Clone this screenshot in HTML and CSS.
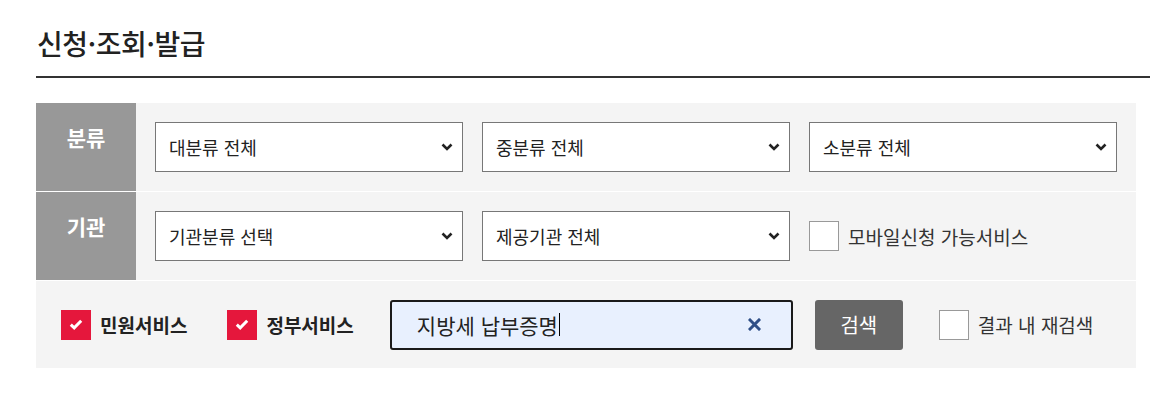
FILE: index.html
```html
<!DOCTYPE html>
<html lang="ko">
<head>
<meta charset="utf-8">
<link rel="stylesheet" href="styles.css">
</head>
<body>
<div class="page">
  <div class="head">
    <h1 class="title">신청·조회·발급</h1>
  </div>
  <div class="panel">
    <div class="row">
      <div class="label">분류</div>
      <div class="cells">
        <div class="select"><span>대분류 전체</span><svg class="chev" width="12" height="8" viewBox="0 0 12 8"><path d="M1.5 1.5 L6 6 L10.5 1.5" fill="none" stroke="#222" stroke-width="2.6"/></svg></div>
        <div class="select"><span>중분류 전체</span><svg class="chev" width="12" height="8" viewBox="0 0 12 8"><path d="M1.5 1.5 L6 6 L10.5 1.5" fill="none" stroke="#222" stroke-width="2.6"/></svg></div>
        <div class="select"><span>소분류 전체</span><svg class="chev" width="12" height="8" viewBox="0 0 12 8"><path d="M1.5 1.5 L6 6 L10.5 1.5" fill="none" stroke="#222" stroke-width="2.6"/></svg></div>
      </div>
    </div>
    <div class="row">
      <div class="label">기관</div>
      <div class="cells">
        <div class="select"><span>기관분류 선택</span><svg class="chev" width="12" height="8" viewBox="0 0 12 8"><path d="M1.5 1.5 L6 6 L10.5 1.5" fill="none" stroke="#222" stroke-width="2.6"/></svg></div>
        <div class="select"><span>제공기관 전체</span><svg class="chev" width="12" height="8" viewBox="0 0 12 8"><path d="M1.5 1.5 L6 6 L10.5 1.5" fill="none" stroke="#222" stroke-width="2.6"/></svg></div>
        <label class="check"><span class="box"></span><span class="check-text">모바일신청 가능서비스</span></label>
      </div>
    </div>
    <div class="row row-search">
      <label class="check strong"><span class="box on"><svg width="14" height="11" viewBox="0 0 14 11"><path d="M1.8 5.6 L5.2 8.8 L12.2 1.8" fill="none" stroke="#fff" stroke-width="3"/></svg></span><span class="check-text">민원서비스</span></label>
      <label class="check strong second"><span class="box on"><svg width="14" height="11" viewBox="0 0 14 11"><path d="M1.8 5.6 L5.2 8.8 L12.2 1.8" fill="none" stroke="#fff" stroke-width="3"/></svg></span><span class="check-text">정부서비스</span></label>
      <div class="search">
        <span class="query">지방세 납부증명<span class="caret"></span></span>
        <svg class="clear" width="13" height="13" viewBox="0 0 13 13"><path d="M2 2 L11 11 M11 2 L2 11" stroke="#2f4f86" stroke-width="3" stroke-linecap="square"/></svg>
      </div>
      <button class="btn">검색</button>
      <label class="check re"><span class="box"></span><span class="check-text">결과 내 재검색</span></label>
    </div>
  </div>
</div>
</body>
</html>
```

FILE: styles.css
```css
* { box-sizing: border-box; }
body {
  margin: 0;
  background: #fff;
  font-family: "Noto Sans CJK KR", "Noto Sans", sans-serif;
  color: #222;
}
.page {
  padding-left: 36px;
}
.head {
  padding-top: 22px;
  padding-bottom: 12px;
  border-bottom: 2px solid #333;
}
.title {
  margin: 0 0 0 1px;
  font-size: 28px;
  line-height: 42px;
  font-weight: 500;
  color: #222;
  letter-spacing: -0.4px;
}
.panel {
  margin-top: 25px;
  width: 1100px;
  display: flex;
  flex-direction: column;
  gap: 1px;
}
.row {
  display: flex;
  height: 88px;
  background: #f4f4f4;
}
.label {
  width: 100px;
  flex: none;
  background: #989898;
  color: #fff;
  font-weight: 700;
  font-size: 21px;
  display: flex;
  align-items: center;
  justify-content: center;
  padding-bottom: 20px;
}
.cells {
  flex: 1;
  display: grid;
  grid-template-columns: repeat(3, 1fr);
  column-gap: 19px;
  padding: 0 19px;
  align-items: center;
}
.select {
  height: 50px;
  background: #fff;
  border: 1px solid #777;
  display: flex;
  align-items: center;
  justify-content: space-between;
  padding: 0 9px 0 13px;
  font-size: 18px;
  color: #222;
}
.chev { flex: none; }
.check {
  display: flex;
  align-items: center;
  gap: 9px;
  font-size: 19px;
  color: #333;
}
.box {
  width: 30px;
  height: 30px;
  flex: none;
  background: #fff;
  border: 1px solid #999;
  display: flex;
  align-items: center;
  justify-content: center;
}
.box.on {
  background: #e5173c;
  border-color: #e5173c;
}
.row-search {
  height: 87px;
  align-items: center;
  padding-left: 25px;
}
.strong { font-weight: 700; color: #222; }
.second { margin-left: 40px; }
.search {
  margin-left: 36px;
  width: 403px;
  height: 50px;
  border: 2px solid #1a1a1a;
  border-radius: 3px;
  background: #e8f0fe;
  display: flex;
  align-items: center;
  justify-content: space-between;
  padding: 0 30px 0 25px;
}
.query {
  font-size: 21px;
  color: #222;
  display: flex;
  align-items: center;
}
.caret {
  display: inline-block;
  width: 1px;
  height: 23px;
  background: #000;
  margin-left: 1px;
}
.btn {
  margin-left: 22px;
  width: 88px;
  height: 50px;
  border: none;
  border-radius: 3px;
  background: #666;
  color: #fff;
  font-family: inherit;
  font-size: 20px;
  padding: 0;
}
.re { margin-left: 36px; }
```
